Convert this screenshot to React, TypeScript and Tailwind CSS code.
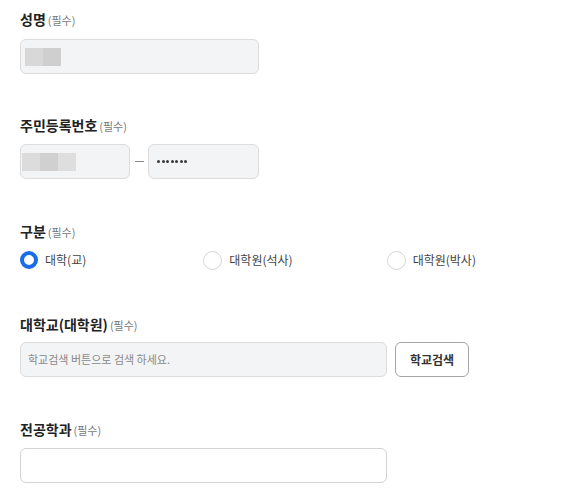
import React, { useState } from 'react';

const font = { fontFamily: '"Noto Sans CJK KR", "Noto Sans", sans-serif' };

const Label: React.FC<{ text: string }> = ({ text }) => (
  <div className="flex items-baseline h-5 leading-5">
    <span className="text-[14px] font-bold text-[#222]">{text}</span>
    <span className="ml-[2px] text-[11px] text-[#777]">(필수)</span>
  </div>
);

const Mosaic: React.FC<{ colors: string[] }> = ({ colors }) => (
  <div className="flex h-[18px]">
    {colors.map((c, i) => (
      <div key={i} className="w-[18px] h-full" style={{ backgroundColor: c }} />
    ))}
  </div>
);

const Radio: React.FC<{ label: string; checked: boolean; onClick: () => void }> = ({ label, checked, onClick }) => (
  <button onClick={onClick} className="flex items-center gap-[7px] text-left">
    {checked ? (
      <span className="w-[18px] h-[18px] rounded-full border-[4px] border-[#1a6dea] bg-white" />
    ) : (
      <span className="w-[19px] h-[19px] rounded-full border border-[#d6d6d6] bg-white" />
    )}
    <span className="text-[12px] text-[#444]">{label}</span>
  </button>
);

export default function App() {
  const [kind, setKind] = useState(0);
  const kinds = ['대학(교)', '대학원(석사)', '대학원(박사)'];

  return (
    <div className="min-h-screen bg-white pl-5 pt-[9px]" style={font}>
      <div className="w-[550px]">
        {/* 성명 */}
        <Label text="성명" />
        <div className="mt-[10px] w-[239px] h-[35px] rounded-[6px] border border-[#dcdcdc] bg-[#f3f4f6] flex items-center pl-[4px]">
          <Mosaic colors={['#d8d8d8', '#cfcfcf']} />
        </div>

        {/* 주민등록번호 */}
        <div className="mt-[41px]">
          <Label text="주민등록번호" />
        </div>
        <div className="mt-[9px] flex items-center">
          <div className="w-[110px] h-[35px] rounded-[6px] border border-[#dcdcdc] bg-[#f3f4f6] flex items-center pl-[1px]">
            <Mosaic colors={['#dcdcdc', '#d0d0d0', '#dedede']} />
          </div>
          <div className="w-[18px] flex justify-center">
            <div className="w-[9px] h-px bg-[#888]" />
          </div>
          <div className="w-[111px] h-[35px] rounded-[6px] border border-[#dcdcdc] bg-[#f3f4f6] flex items-center pl-[8px] gap-[1.5px]">
            {Array.from({ length: 7 }).map((_, i) => (
              <span key={i} className="w-[3px] h-[3px] rounded-full bg-[#3a3a3a]" />
            ))}
          </div>
        </div>

        {/* 구분 */}
        <div className="mt-[42px]">
          <Label text="구분" />
        </div>
        <div className="mt-[9px] grid grid-cols-3 h-5 items-center">
          {kinds.map((k, i) => (
            <Radio key={k} label={k} checked={kind === i} onClick={() => setKind(i)} />
          ))}
        </div>

        {/* 대학교(대학원) */}
        <div className="mt-[44px]">
          <Label text="대학교(대학원)" />
        </div>
        <div className="mt-[8px] flex gap-2">
          <div className="w-[367px] h-[35px] rounded-[6px] border border-[#dcdcdc] bg-[#f3f4f6] flex items-center pl-[7px] text-[11px] text-[#8a8a8a]">
            학교검색 버튼으로 검색 하세요.
          </div>
          <button className="w-[74px] h-[35px] rounded-[6px] border border-[#a5a5a5] bg-white text-[12px] font-semibold text-[#333]">
            학교검색
          </button>
        </div>

        {/* 전공학과 */}
        <div className="mt-[42px]">
          <Label text="전공학과" />
        </div>
        <div className="mt-[9px]">
          <input className="w-[367px] h-[35px] rounded-[6px] border border-[#d3d3d3] bg-white outline-none px-2 text-[12px]" />
        </div>
      </div>
    </div>
  );
}
